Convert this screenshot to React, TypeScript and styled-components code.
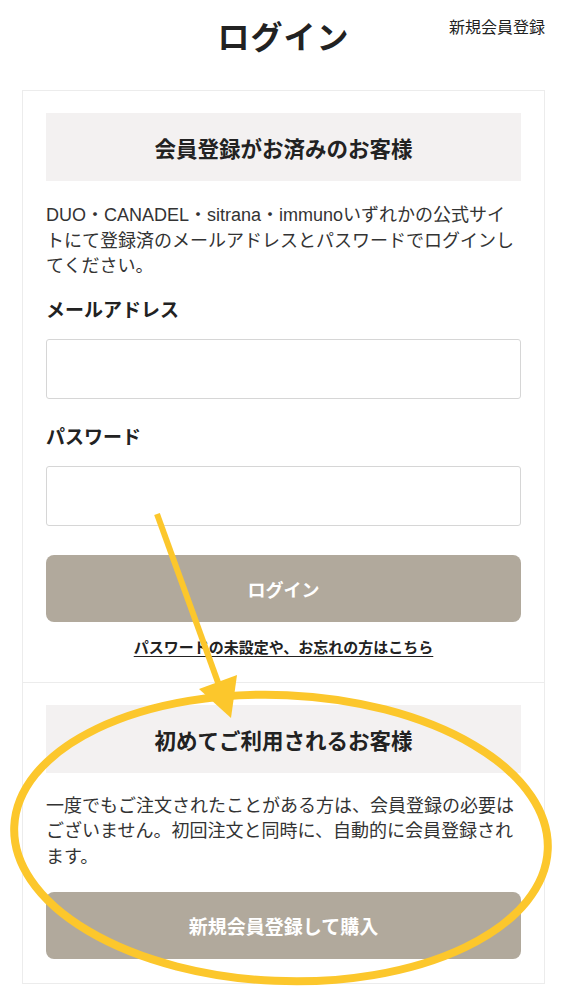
import React from 'react';
import styled, { createGlobalStyle } from 'styled-components';

const GlobalStyle = createGlobalStyle`
  * {
    box-sizing: border-box;
  }
  body {
    margin: 0;
    background: #fff;
    color: #333;
    font-family: "Liberation Sans", "Noto Sans CJK JP", sans-serif;
  }
`;

const Page = styled.div`
  position: relative;
  width: 567px;
  min-height: 1000px;
  padding-bottom: 15px;
`;

const Header = styled.header`
  display: grid;
  grid-template-columns: 1fr auto 1fr;
  align-items: start;
  height: 90px;
  padding-top: 18px;
`;

const Title = styled.h1`
  grid-column: 2;
  margin: 0;
  font-size: 32px;
  line-height: 40px;
  font-weight: 700;
  color: #222;
  letter-spacing: 1px;
`;

const HeaderLink = styled.a`
  justify-self: end;
  padding-right: 22px;
  font-size: 16px;
  line-height: 20px;
  color: #222;
  text-decoration: none;
`;

const Card = styled.section<{ $first?: boolean }>`
  margin: 0 22px;
  border: 1px solid #ececec;
  border-top: ${({ $first }) => ($first ? '1px solid #ececec' : 'none')};
  padding: 22px 23px 24px;
`;

const SectionHeading = styled.h2`
  display: flex;
  align-items: center;
  justify-content: center;
  height: 68px;
  margin: 0;
  background: #f3f1f1;
  font-size: 21.5px;
  font-weight: 700;
  color: #222;
`;

const Lead = styled.p<{ $gap: number }>`
  margin: ${({ $gap }) => $gap}px 0 0;
  font-size: 18px;
  line-height: 25.5px;
  color: #333;
`;

const Label = styled.label<{ $gap: number }>`
  display: block;
  margin-top: ${({ $gap }) => $gap}px;
  font-size: 19px;
  line-height: 25px;
  font-weight: 700;
  color: #222;
`;

const Input = styled.input`
  display: block;
  width: 100%;
  height: 60px;
  margin-top: 16.5px;
  border: 1px solid #d6d6d6;
  border-radius: 3px;
  background: #fff;
  font-size: 16px;
  padding: 0 12px;
`;

const Button = styled.button<{ $gap: number; $size: number }>`
  display: flex;
  align-items: center;
  justify-content: center;
  width: 100%;
  height: 67px;
  margin-top: ${({ $gap }) => $gap}px;
  border: none;
  border-radius: 8px;
  background: #b1a99c;
  color: #fff;
  font-family: "Noto Sans CJK JP", sans-serif;
  font-size: ${({ $size }) => $size}px;
  font-weight: 700;
  cursor: pointer;
`;

const ForgotLink = styled.a`
  display: block;
  margin-top: 16px;
  text-align: center;
  font-size: 15px;
  line-height: 20px;
  font-weight: 700;
  color: #222;
  text-decoration: underline;
  text-underline-offset: 3px;
`;

const Annotation = styled.svg`
  position: absolute;
  top: 0;
  left: 0;
  pointer-events: none;
`;

export default function App() {
  return (
    <>
      <GlobalStyle />
      <Page>
        <Header>
          <Title>ログイン</Title>
          <HeaderLink href="#">新規会員登録</HeaderLink>
        </Header>

        <Card $first>
          <SectionHeading>会員登録がお済みのお客様</SectionHeading>
          <Lead $gap={22}>
            DUO・CANADEL・sitrana・immunoいずれかの公式サイトにて登録済のメールアドレスとパスワードでログインしてください。
          </Lead>
          <Label $gap={18} htmlFor="email">メールアドレス</Label>
          <Input id="email" type="email" />
          <Label $gap={25.5} htmlFor="password">パスワード</Label>
          <Input id="password" type="password" />
          <Button $gap={29} $size={18}>ログイン</Button>
          <ForgotLink href="#">パスワードの未設定や、お忘れの方はこちら</ForgotLink>
        </Card>

        <Card>
          <SectionHeading>初めてご利用されるお客様</SectionHeading>
          <Lead $gap={20.5}>
            一度でもご注文されたことがある方は、会員登録の必要はございません。初回注文と同時に、自動的に会員登録されます。
          </Lead>
          <Button $gap={22} $size={19}>新規会員登録して購入</Button>
        </Card>

        {/* yellow hand-drawn annotation over the page */}
        <Annotation width="567" height="1000" viewBox="0 0 567 1000">
          <ellipse
            cx="281"
            cy="838"
            rx="267"
            ry="143"
            fill="none"
            stroke="#fcc72c"
            strokeWidth="8"
            transform="rotate(2.5 281 838)"
          />
          <line x1="157" y1="514" x2="220" y2="688" stroke="#fcc72c" strokeWidth="6" />
          <polygon points="231,718 199,689 237,675" fill="#fcc72c" />
        </Annotation>
      </Page>
    </>
  );
}
